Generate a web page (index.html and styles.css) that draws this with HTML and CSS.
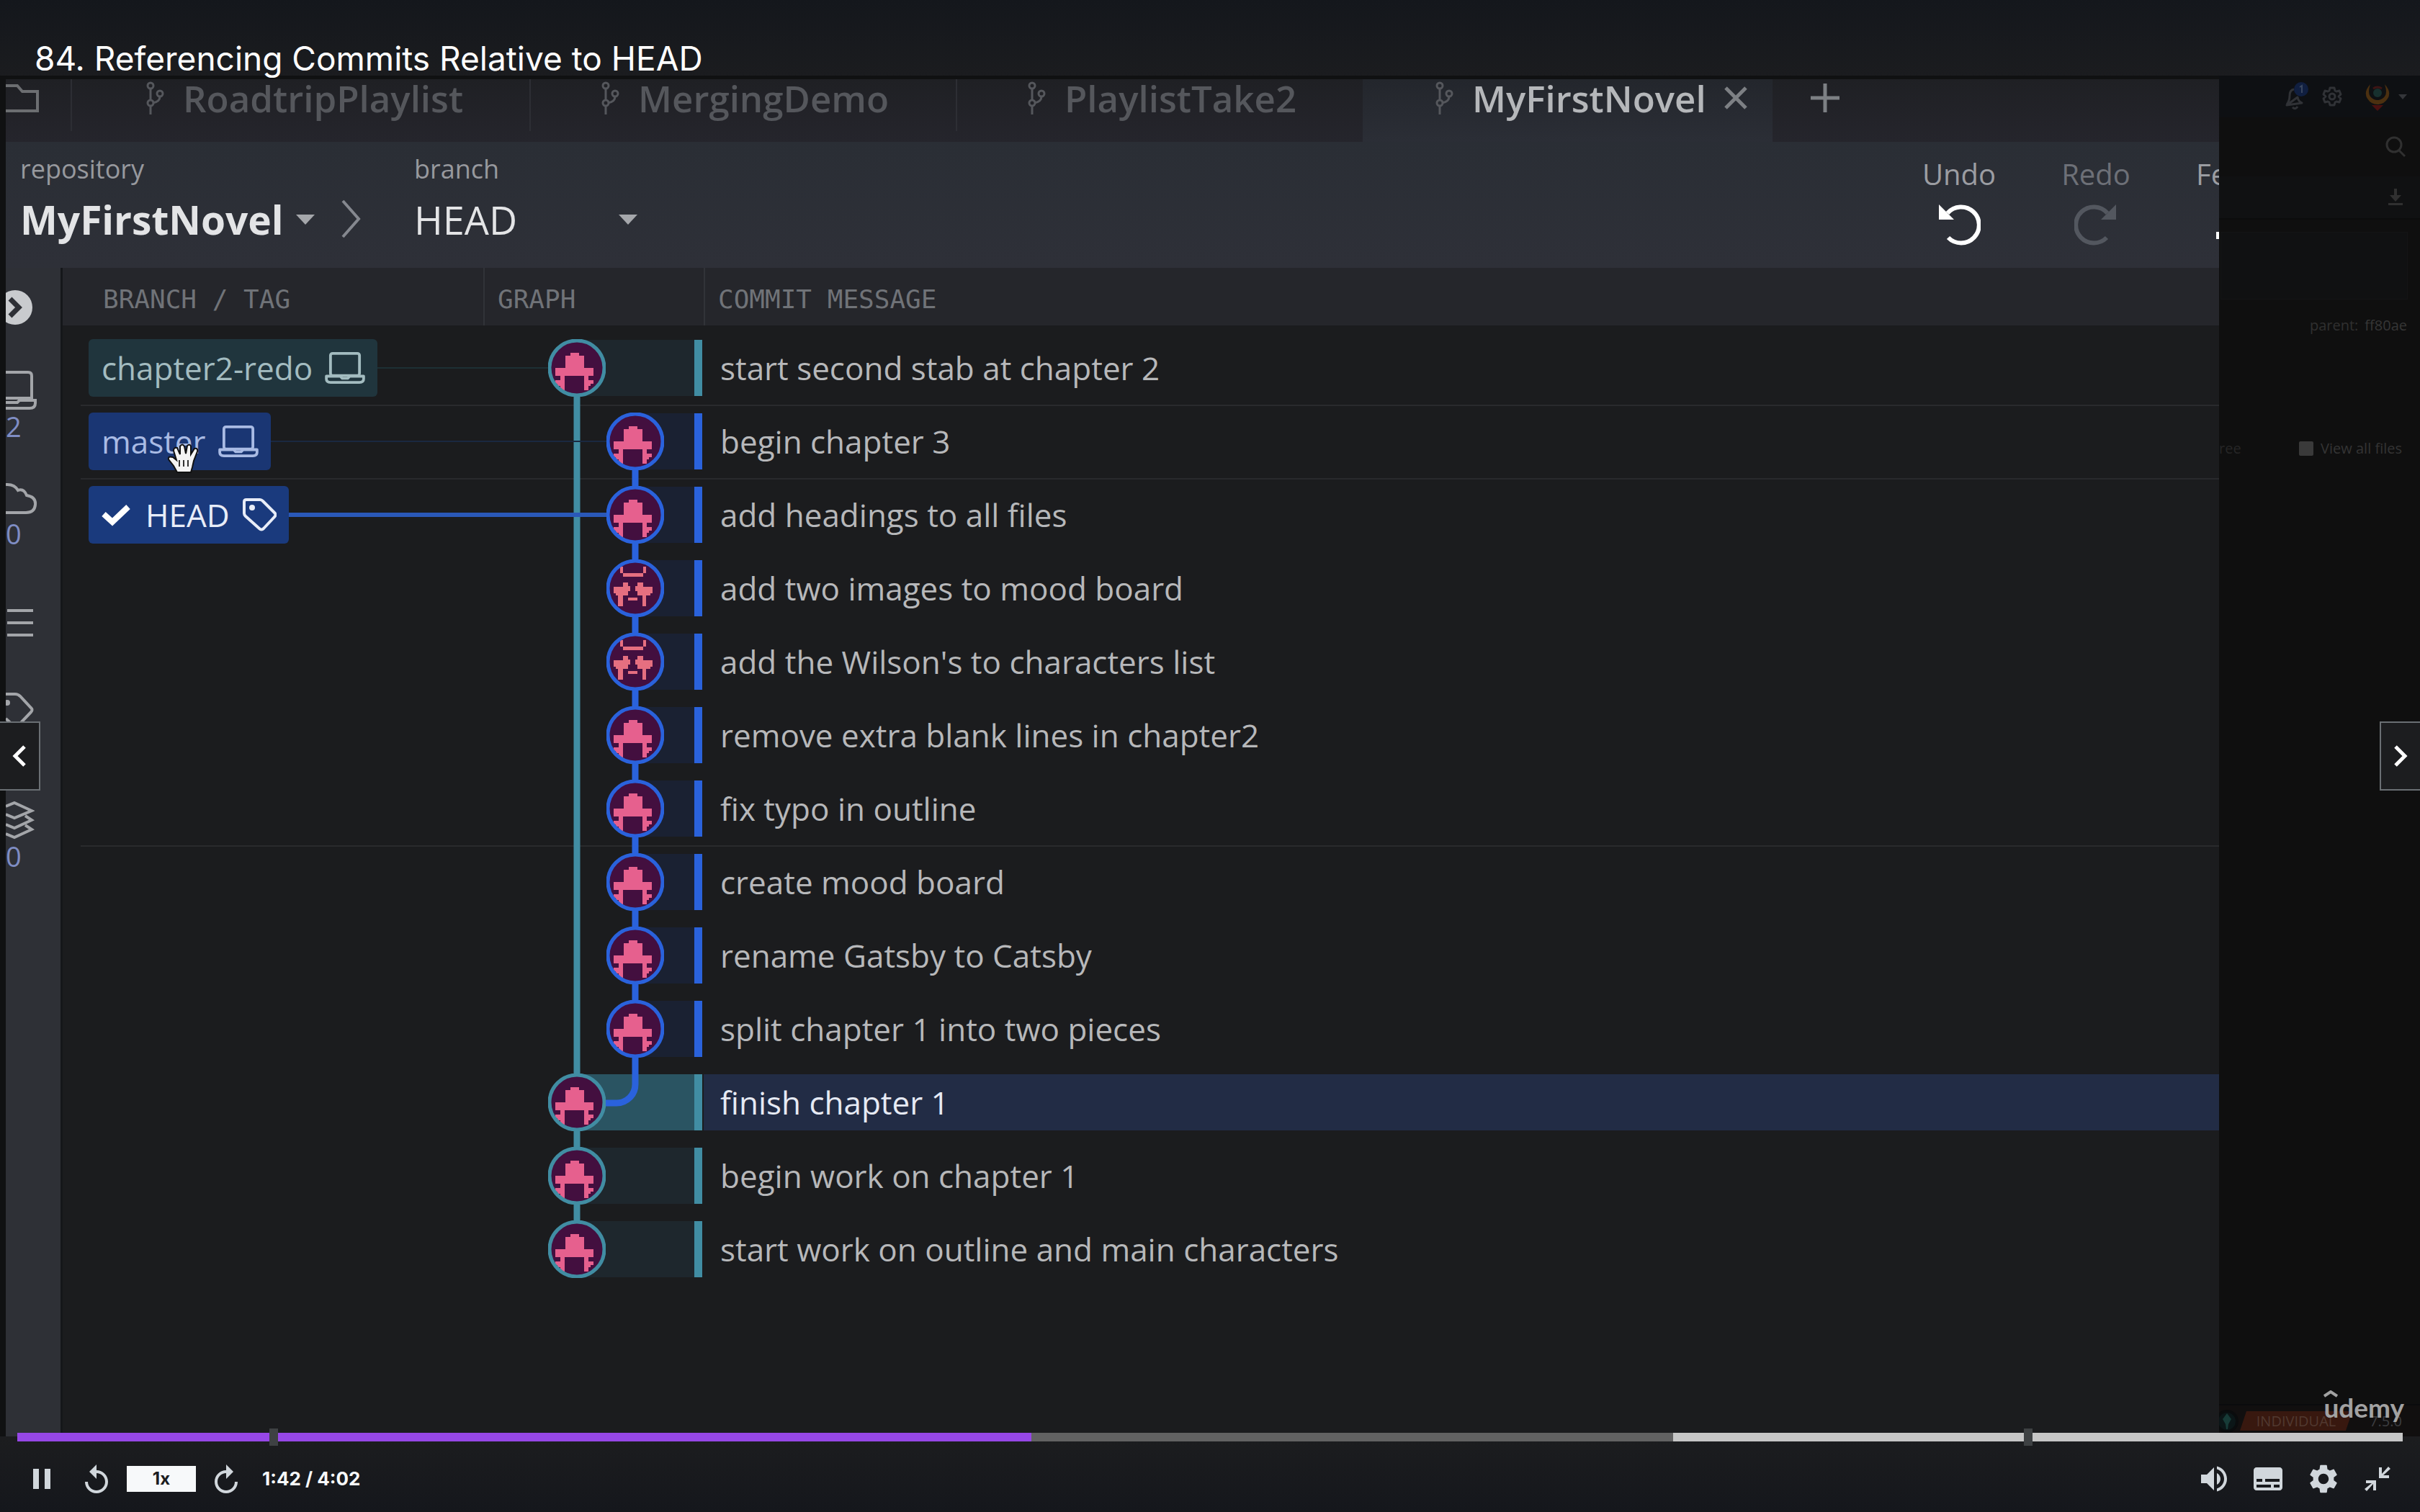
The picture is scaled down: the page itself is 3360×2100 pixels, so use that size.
FILE: index.html
```html
<!DOCTYPE html>
<html lang="en">
<head>
<meta charset="utf-8">
<meta name="viewport" content="width=device-width, initial-scale=1">
<title>84. Referencing Commits Relative to HEAD</title>
<link rel="stylesheet" href="styles.css">
</head>
<body>
<svg class="sprite" aria-hidden="true">
  <symbol id="fork" viewBox="0 0 28 48"><g fill="none" stroke="currentColor" stroke-width="3"><circle cx="8" cy="7" r="4"/><circle cx="8" cy="31" r="4"/><circle cx="21" cy="18" r="4"/><path d="M8 11v16M8 35v12M21 22c0 6-4 8-10 9"/></g></symbol>
  <symbol id="laptop" viewBox="0 0 58 48"><g fill="none" stroke="currentColor" stroke-width="4" stroke-linejoin="round"><rect x="8" y="3" width="42" height="32" rx="3"/><path d="M2 36h20l3 3h8l3-3h20v4q0 5-6 5H8q-6 0-6-5z"/></g></symbol>
  <symbol id="tag" viewBox="0 0 48 48"><path d="M3 6q0-3 3-3h19q2 0 4 2l16 16q3 3 0 6L30 43q-3 3-6 0L5 26q-2-2-2-4z" fill="none" stroke="currentColor" stroke-width="4" stroke-linejoin="round"/><circle cx="14" cy="14" r="4" fill="currentColor"/></symbol>
  <symbol id="crab" viewBox="-40 -40 80 80"><circle r="38" fill="#430f3f"/><path fill="#e6608e" d="M-9-21H3v4h7V0h13v11H16v6h7v5h-4v3h-3v6h-6V11h-27v20h-6v-6h-4v-3h-3v-5h7v-6h-7V0h14v-17h7z"/><circle r="38" fill="none" stroke="currentColor" stroke-width="5"/></symbol>
  <symbol id="bandit" viewBox="-40 -40 80 80"><circle r="38" fill="#430f3f"/><path fill="#e66f80" d="M-17-21h28v5h-28zM-21-30h4v9h-4zM11-30h4v9h-4zM-17-8h7v5h3v7h-3v6H3V4H0v-7h3v-5h8v6h13V7h-3v3h-6v15h-5V10h-27v15h-7V10h-3V7h-3v-9h13zM-10 13H3v4h-13z"/><circle r="38" fill="none" stroke="currentColor" stroke-width="5"/></symbol>
</svg>

<header class="title-bar"><h1>84. Referencing Commits Relative to HEAD</h1></header>

<main class="video">
  <section class="client">
    <nav class="tabs" aria-label="Repositories">
      <button class="folder" aria-label="Open repository"><svg width="46" height="40" viewBox="0 0 46 40" fill="none" stroke="currentColor" stroke-width="4"><path d="M0 2h16l7 8h21v27H0"/></svg></button>
      <button class="tab tab-a"><svg class="fork"><use href="#fork"/></svg>RoadtripPlaylist</button>
      <button class="tab tab-b"><svg class="fork"><use href="#fork"/></svg>MergingDemo</button>
      <button class="tab tab-c"><svg class="fork"><use href="#fork"/></svg>PlaylistTake2</button>
      <button class="tab active"><svg class="fork"><use href="#fork"/></svg>MyFirstNovel<svg class="close" width="32" height="32" viewBox="0 0 32 32" stroke="currentColor" stroke-width="5"><path d="M2 2l28 28M30 2L2 30"/></svg></button>
      <button class="add" aria-label="New tab"><svg width="40" height="40" viewBox="0 0 40 40" stroke="currentColor" stroke-width="5"><path d="M20 0v40M0 20h40"/></svg></button>
    </nav>

    <div class="toolbar">
      <div class="picker repo"><span class="caption">repository</span><button class="value strong">MyFirstNovel<i class="caret"></i></button></div>
      <svg class="crumb" width="30" height="54" viewBox="0 0 30 54" fill="none" stroke="#85888f" stroke-width="4"><path d="M3 2l22 25L3 52"/></svg>
      <div class="picker branch"><span class="caption">branch</span><button class="value">HEAD<i class="caret"></i></button></div>
      <div class="actions">
        <button class="action">Undo<svg width="60" height="60" viewBox="0 0 60 60"><path d="M14 15A25 25 0 1 1 15 49" fill="none" stroke="#fff" stroke-width="6"/><path d="M2 3v21h21z" fill="#fff"/></svg></button>
        <button class="action off">Redo<svg width="60" height="60" viewBox="0 0 60 60"><path d="M46 15A25 25 0 1 0 45 49" fill="none" stroke="#53575f" stroke-width="6"/><path d="M58 3v21H37z" fill="#53575f"/></svg></button>
        <button class="action fetch">Fetch<svg width="60" height="60" viewBox="0 0 60 60"><path d="M0 46h40" stroke="#fff" stroke-width="10"/></svg></button>
      </div>
    </div>

    <div class="workspace">
      <aside class="rail">
        <svg width="40" height="48" viewBox="0 0 40 48"><circle cx="13" cy="24" r="24" fill="#c9cbce"/><path d="M6 12l12 12L6 36" fill="none" stroke="#2e3036" stroke-width="7"/></svg>
        <div class="rail-item one"><svg width="46" height="56" viewBox="0 0 46 56" fill="none" stroke="#a3a5a9" stroke-width="4"><path d="M0 3h31q5 0 5 5v31H0M0 45h16l3-3h22v4q0 7-8 7H0"/></svg><span>2</span></div>
        <div class="rail-item two"><svg width="46" height="46" viewBox="0 0 46 46" fill="none" stroke="#a3a5a9" stroke-width="4"><path d="M0 3q12-1 17 8 8-3 12 7 13 2 12 13-1 11-13 11H0"/></svg><span>0</span></div>
        <svg class="three" width="40" height="44" viewBox="0 0 40 44" stroke="#a3a5a9" stroke-width="4"><path d="M2 4h36M2 21h36M2 38h36"/></svg>
        <svg class="four" width="40" height="50" viewBox="0 0 40 50"><path d="M0 3h13q4 0 7 3l15 16q3 3 0 6L17 47q-3 2-6 0L0 37" fill="none" stroke="#a3a5a9" stroke-width="4"/><circle cx="2" cy="15" r="4" fill="#a3a5a9"/></svg>
        <div class="rail-item five"><svg width="40" height="54" viewBox="0 0 40 54" fill="none" stroke="#a3a5a9" stroke-width="4"><path d="M0 7l12-5 24 11-24 10L0 18M0 32l12 5 24-11-9-6M0 45l12 5 24-11-9-6"/></svg><span>0</span></div>
      </aside>

      <table class="log">
        <colgroup><col class="col-branch"><col class="col-graph"><col></colgroup>
        <thead><tr><th>BRANCH / TAG</th><th>GRAPH</th><th>COMMIT MESSAGE</th></tr></thead>
        <tbody>
          <tr class="teal"><td class="refs"><div><span class="ref">chapter2-redo<svg class="ref-icon"><use href="#laptop"/></svg></span><i class="wire"></i></div></td>
            <td class="graph"><svg viewBox="0 0 306 102"><path class="thin" d="M0 51h90"/><path class="band" d="M130 12h163v78H130z"/><path class="bar" d="M293 12h11v78h-11z"/><path class="main" d="M130 51v51"/><use href="#crab" x="90" y="11" width="80" height="80"/></svg></td><td>start second stab at chapter 2</td></tr>
          <tr class="blue line"><td class="refs"><div><span class="ref">master<svg class="ref-icon"><use href="#laptop"/></svg></span><i class="wire"></i></div></td>
            <td class="graph"><svg viewBox="0 0 306 102"><path class="main" d="M130 0v102"/><path class="thin" d="M0 51h171"/><path class="band" d="M211 12h82v78h-82z"/><path class="bar" d="M293 12h11v78h-11z"/><path class="side" d="M211 51v51"/><use href="#crab" x="171" y="11" width="80" height="80"/></svg></td><td>begin chapter 3</td></tr>
          <tr class="blue line head"><td class="refs"><div><span class="ref"><svg class="check" width="40" height="32" viewBox="0 0 40 32"><path d="M3 15l12 11L37 5" fill="none" stroke="#fff" stroke-width="8"/></svg>HEAD<svg class="ref-icon tag"><use href="#tag"/></svg></span><i class="wire"></i></div></td>
            <td class="graph"><svg viewBox="0 0 306 102"><path class="main" d="M130 0v102"/><path class="thin" d="M0 51h171"/><path class="band" d="M211 12h82v78h-82z"/><path class="bar" d="M293 12h11v78h-11z"/><path class="side" d="M211 0v102"/><use href="#crab" x="171" y="11" width="80" height="80"/></svg></td><td>add headings to all files</td></tr>
          <tr class="blue"><td></td><td class="graph"><svg viewBox="0 0 306 102"><path class="main" d="M130 0v102"/><path class="band" d="M211 12h82v78h-82z"/><path class="bar" d="M293 12h11v78h-11z"/><path class="side" d="M211 0v102"/><use href="#bandit" x="171" y="11" width="80" height="80"/></svg></td><td>add two images to mood board</td></tr>
          <tr class="blue"><td></td><td class="graph"><svg viewBox="0 0 306 102"><path class="main" d="M130 0v102"/><path class="band" d="M211 12h82v78h-82z"/><path class="bar" d="M293 12h11v78h-11z"/><path class="side" d="M211 0v102"/><use href="#bandit" x="171" y="11" width="80" height="80"/></svg></td><td>add the Wilson's to characters list</td></tr>
          <tr class="blue"><td></td><td class="graph"><svg viewBox="0 0 306 102"><path class="main" d="M130 0v102"/><path class="band" d="M211 12h82v78h-82z"/><path class="bar" d="M293 12h11v78h-11z"/><path class="side" d="M211 0v102"/><use href="#crab" x="171" y="11" width="80" height="80"/></svg></td><td>remove extra blank lines in chapter2</td></tr>
          <tr class="blue"><td></td><td class="graph"><svg viewBox="0 0 306 102"><path class="main" d="M130 0v102"/><path class="band" d="M211 12h82v78h-82z"/><path class="bar" d="M293 12h11v78h-11z"/><path class="side" d="M211 0v102"/><use href="#crab" x="171" y="11" width="80" height="80"/></svg></td><td>fix typo in outline</td></tr>
          <tr class="blue line"><td></td><td class="graph"><svg viewBox="0 0 306 102"><path class="main" d="M130 0v102"/><path class="band" d="M211 12h82v78h-82z"/><path class="bar" d="M293 12h11v78h-11z"/><path class="side" d="M211 0v102"/><use href="#crab" x="171" y="11" width="80" height="80"/></svg></td><td>create mood board</td></tr>
          <tr class="blue"><td></td><td class="graph"><svg viewBox="0 0 306 102"><path class="main" d="M130 0v102"/><path class="band" d="M211 12h82v78h-82z"/><path class="bar" d="M293 12h11v78h-11z"/><path class="side" d="M211 0v102"/><use href="#crab" x="171" y="11" width="80" height="80"/></svg></td><td>rename Gatsby to Catsby</td></tr>
          <tr class="blue"><td></td><td class="graph"><svg viewBox="0 0 306 102"><path class="main" d="M130 0v102"/><path class="band" d="M211 12h82v78h-82z"/><path class="bar" d="M293 12h11v78h-11z"/><path class="side" d="M211 0v102"/><use href="#crab" x="171" y="11" width="80" height="80"/></svg></td><td>split chapter 1 into two pieces</td></tr>
          <tr class="teal selected"><td></td><td class="graph"><svg viewBox="0 0 306 102"><path class="band" d="M130 12h163v78H130z"/><path class="bar" d="M293 12h11v78h-11z"/><path class="main" d="M130 0v102"/><path class="side" d="M211 0v26a26 26 0 0 1-26 26h-20"/><use href="#crab" x="90" y="11" width="80" height="80"/></svg></td><td>finish chapter 1</td></tr>
          <tr class="teal"><td></td><td class="graph"><svg viewBox="0 0 306 102"><path class="band" d="M130 12h163v78H130z"/><path class="bar" d="M293 12h11v78h-11z"/><path class="main" d="M130 0v102"/><use href="#crab" x="90" y="11" width="80" height="80"/></svg></td><td>begin work on chapter 1</td></tr>
          <tr class="teal"><td></td><td class="graph"><svg viewBox="0 0 306 102"><path class="band" d="M130 12h163v78H130z"/><path class="bar" d="M293 12h11v78h-11z"/><path class="main" d="M130 0v51"/><use href="#crab" x="90" y="11" width="80" height="80"/></svg></td><td>start work on outline and main characters</td></tr>
        </tbody>
      </table>
    </div>
  </section>

  <aside class="details">
    <div class="profile">
      <svg width="40" height="46" viewBox="0 0 40 46"><path d="M9 34q4-5 4-12 0-8 6-9M24 24q1 6 6 8L9 35zM17 38q4 4 7-1" fill="none" stroke="#303236" stroke-width="3" stroke-linejoin="round"/><circle cx="29" cy="13" r="10" fill="#101f40"/><path d="M27 10l3-2v10" fill="none" stroke="#39465e" stroke-width="2"/></svg>
      <svg width="28" height="28" viewBox="0 0 28 28" fill="none" stroke="#303236" stroke-width="3" stroke-linejoin="round"><path d="M11 2h6l1 4 2 1 4-1 2 5-3 3 3 3-2 5-4-1-2 1-1 4h-6l-1-4-2-1-4 1-2-5 3-3-3-3 2-5 4 1 2-1z"/><circle cx="14" cy="14" r="4"/></svg>
      <svg width="34" height="42" viewBox="0 0 34 42"><path d="M7 4Q-3 15 3 24q5 8 14 8t14-8q6-9-4-20 4 12 0 17-4 5-10 5T7 21Q3 16 7 4z" fill="#4b3010"/><circle cx="17" cy="16" r="6" fill="#17302e"/><path d="M11 10q6-4 12 0" fill="none" stroke="#3d1515" stroke-width="3"/><path d="M9 33h16l-4 4-4 4-4-4z" fill="#4b1010"/></svg>
      <i class="small-caret"></i>
    </div>
    <div class="search"><svg width="28" height="30" viewBox="0 0 28 30" fill="none" stroke="#303030" stroke-width="3"><circle cx="12" cy="12" r="10"/><path d="M19 20l8 8"/></svg></div>
    <div class="download"><svg width="20" height="24" viewBox="0 0 20 24" fill="#303030"><path d="M8 0h4v9h6l-8 9-8-9h6zM0 20h20v3H0z"/></svg></div>
    <div class="message-box"></div>
    <div class="parent"><span>parent:</span><a href="#ff80ae">ff80ae</a></div>
    <div class="files"><span class="tree">ree</span><label><input type="checkbox">View all files</label></div>
    <div class="status">
      <svg width="34" height="34" viewBox="0 0 34 34"><circle cx="11" cy="17" r="14" fill="#0b1617" stroke="#0a0c0d" stroke-width="4"/><path d="M11 6l6 8-4 7-1 7h-2l-1-7-4-7z" fill="#173b37"/></svg>
      <span class="plan">INDIVIDUAL</span><span class="version">7.5.0</span>
    </div>
  </aside>

  <div class="watermark"><svg width="20" height="11" viewBox="0 0 20 11"><path d="M1 8l9-6 9 6" fill="none" stroke="#a2a2a2" stroke-width="4"/></svg><span>udemy</span></div>
  <button class="step prev" aria-label="Previous lecture"><svg width="22" height="32" viewBox="0 0 22 32"><path d="M18 3L5 16l13 13" fill="none" stroke="#fff" stroke-width="5"/></svg></button>
  <button class="step next" aria-label="Next lecture"><svg width="22" height="32" viewBox="0 0 22 32"><path d="M4 3l13 13L4 29" fill="none" stroke="#fff" stroke-width="5"/></svg></button>
</main>

<footer class="player">
  <div class="progress">
    <span class="played" style="width:42.5%"></span><span class="buffered" style="width:26.9%"></span><span class="rest"></span>
    <i class="mark" style="left:10.57%"></i><i class="mark" style="left:84.12%"></i>
  </div>
  <div class="controls">
    <button class="icon pause" aria-label="Pause"><svg width="24" height="28" viewBox="0 0 24 28"><path d="M0 0h8v28H0zM16 0h8v28h-8z"/></svg></button>
    <button class="icon" aria-label="Rewind 5 seconds"><svg width="32" height="40" viewBox="4 1 16 20"><path d="M12 5V1L7 6l5 5V7c3.310 0 6 2.690 6 6s-2.690 6-6 6-6-2.690-6-6H4c0 4.420 3.580 8 8 8s8-3.580 8-8-3.580-8-8-8z"/></svg></button>
    <button class="rate">1x</button>
    <button class="icon" aria-label="Forward 5 seconds"><svg width="32" height="40" viewBox="4 1 16 20"><path d="M12 5V1l5 5-5 5V7c-3.310 0-6 2.690-6 6s2.690 6 6 6 6-2.690 6-6h2c0 4.420-3.580 8-8 8s-8-3.580-8-8 3.580-8 8-8z"/></svg></button>
    <span class="time">1:42 / 4:02</span>
    <div class="right">
      <button class="icon" aria-label="Volume"><svg width="36" height="36" viewBox="3 3 18 18"><path d="M3 9v6h4l5 5V4L7 9H3zm11 -1v8c1.480-.730 2.500-2.250 2.500-4.020S15.480 8.700 14 8zM14 3.230v2.060c2.890.860 5 3.540 5 6.710s-2.110 5.850-5 6.710v2.060c4.010-.910 7-4.490 7-8.770s-2.990-7.860-7-8.770z"/></svg></button>
      <button class="icon" aria-label="Subtitles"><svg width="40" height="32" viewBox="2 4 20 16"><path d="M20 4H4c-1.100 0-2 .9-2 2v12c0 1.100.9 2 2 2h16c1.100 0 2-.9 2-2V6c0-1.100-.9-2-2-2zM4 12h4v2H4v-2zm10 6H4v-2h10v2zm6 0h-4v-2h4v2zm0-4H10v-2h10v2z"/></svg></button>
      <button class="icon" aria-label="Settings"><svg width="40" height="40" viewBox="2 2 20 20"><path d="M19.140 12.940c.040-.3.060-.610.060-.940 0-.320-.020-.640-.070-.940l2.030-1.580c.180-.140.230-.410.120-.610l-1.920-3.320c-.120-.220-.370-.290-.590-.220l-2.390.960c-.5-.380-1.030-.7-1.620-.940l-.360-2.540c-.040-.240-.240-.410-.480-.410h-3.840c-.240 0-.430.170-.470.410l-.36 2.540c-.59.240-1.130.570-1.620.940l-2.390-.960c-.22-.080-.47 0-.59.220L2.740 8.870c-.12.210-.08.470.12.610l2.030 1.580c-.05.300-.09.630-.09.940s.020.640.070.940l-2.030 1.580c-.18.140-.23.410-.12.610l1.920 3.320c.12.220.37.290.59.220l2.390-.96c.5.380 1.030.7 1.620.94l.36 2.540c.05.240.24.410.48.410h3.840c.24 0 .44-.17.470-.41l.36-2.540c.59-.24 1.130-.56 1.620-.94l2.390.96c.22.080.47 0 .59-.22l1.920-3.320c.12-.22.070-.47-.12-.61l-2.010-1.580zM12 15.600c-1.980 0-3.600-1.620-3.600-3.600s1.620-3.600 3.600-3.600 3.600 1.620 3.600 3.600-1.620 3.600-3.600 3.600z"/></svg></button>
      <button class="icon" aria-label="Exit full screen"><svg width="36" height="36" viewBox="0 0 36 36"><path d="M20 2h4v9L33 1l3 3-10 9h8v4H20zM2 20h14v14h-4v-9L3 35l-3-3 10-8H2z"/></svg></button>
    </div>
  </div>
</footer>

<svg class="grab-cursor" width="46" height="44" viewBox="0 0 46 44" aria-hidden="true"><path d="M14 42L9 33 2 24q-1-5 6-3l5 4-4-13q0-5 5-4l4 9V6q3-5 6 0l2 10 2-11q4-3 5 1v11l5-8q5-1 4 4l-5 13-2 9-2 7z" fill="#f4f4f4" stroke="#111" stroke-width="2"/><path d="M17 25v9M23 25v9M29 25v9" stroke="#333" stroke-width="2"/></svg>
</body>
</html>
```
FILE: styles.css
```css
* { box-sizing: border-box; }
body {
  margin: 0;
  min-height: 100vh;
  display: flex;
  flex-direction: column;
  position: relative;
  overflow-x: hidden;
  background: #1b1c1e;
  color: #b7b8ba;
  font-family: "Open Sans", "Noto Sans", sans-serif;
}
button {
  margin: 0;
  padding: 0;
  border: 0;
  background: none;
  color: inherit;
  font: inherit;
}
svg { display: block; flex: none; }
.sprite { position: absolute; width: 0; height: 0; }

.title-bar {
  height: 105px;
  padding: 52px 48px 0;
  background: linear-gradient(#14171c, #1b1c1f);
}
h1 {
  position: relative;
  z-index: 2;
  margin: 0;
  color: #fff;
  font: 400 46px/58px Inter, sans-serif;
  white-space: nowrap;
}

/* Recorded desktop */
.video {
  flex: 1;
  position: relative;
  display: grid;
  grid-template-columns: minmax(0, 1fr) 279px;
  background: #101112;
}
.client {
  display: flex;
  flex-direction: column;
  min-width: 0;
  margin: 5px 0 0 8px;
  background: #1b1c1e;
  overflow: hidden;
}
.tabs {
  display: flex;
  height: 87px;
  background: linear-gradient(#1f2024, #25252c);
  color: #55575c;
  font-size: 51px;
  font-weight: 600;
  line-height: 52px;
}
.folder {
  width: 92px;
  padding-bottom: 34px;
  color: #6c6e71;
}
.tab {
  display: flex;
  align-items: center;
  gap: 25px;
  padding: 0 0 36px 101px;
  white-space: nowrap;
}
.fork { width: 28px; height: 48px; }
.folder, .tab-a, .tab-b {
  background: linear-gradient(#2d2e34, #2d2e34) 100% 0 / 2px 72px no-repeat;
}
.tab-a { width: 637px; }
.tab-b { width: 592px; padding-left: 96px; }
.tab-c { width: 563px; padding-left: 96px; }
.tab.active {
  width: 569px;
  padding-left: 99px;
  background: linear-gradient(#23262c, #2b2e36);
  color: #b5b7ba;
}
.active .fork { color: #55575c; }
.close { color: #7d8084; }
.add { padding: 0 0 36px 53px; color: #7d8084; }

.toolbar {
  display: flex;
  height: 175px;
  background: linear-gradient(#2a2e35, #2e3038);
}
.picker {
  display: flex;
  flex-direction: column;
  align-items: flex-start;
  gap: 14px;
  padding-top: 14px;
}
.repo { width: 465px; padding-left: 20px; }
.branch { width: 340px; padding-left: 72px; }
.caption { color: #97999e; font-size: 36px; line-height: 48px; }
.value {
  display: flex;
  align-items: center;
  gap: 17px;
  color: #e3e4e6;
  font-size: 54px;
  line-height: 64px;
  white-space: nowrap;
}
.strong { font-size: 55px; font-weight: 700; }
.branch .value { width: 310px; justify-content: space-between; }
.caret {
  border: 13px solid transparent;
  border-top: 14px solid #a5a7ab;
  border-bottom: 0;
}
.crumb { margin-top: 80px; }
.actions {
  display: flex;
  gap: 68px;
  margin-left: auto;
  padding-top: 20px;
}
.action {
  display: flex;
  flex-direction: column;
  align-items: center;
  gap: 14px;
  width: 122px;
  height: 130px;
  color: #9b9da2;
  font-size: 40px;
  line-height: 50px;
}
.action.off { color: #6d7077; }
.action.fetch { width: 32px; margin-left: 10px; align-items: flex-start; overflow: hidden; }
.fetch svg { align-self: flex-end; margin-right: -56px; }

.workspace { display: flex; flex: 1; min-width: 0; }
.rail {
  display: flex;
  flex-direction: column;
  width: 79px;
  padding-top: 31px;
  background: #2e3036;
  border-right: 3px solid #15171a;
  color: #7f8dc4;
  font-size: 38px;
  line-height: 44px;
}
.rail-item { display: flex; flex-direction: column; align-items: flex-start; }
.one { margin-top: 63px; }
.two { margin-top: 56px; }
.two span { margin-top: 3px; }
.three { margin-top: 81px; }
.four { margin-top: 73px; }
.five { margin-top: 102px; }

.log {
  flex: 1;
  align-self: flex-start;
  table-layout: fixed;
  width: 0;
  border-collapse: collapse;
  border-spacing: 0;
}
.col-branch { width: 584px; }
.col-graph { width: 306px; }
.log th {
  height: 80px;
  padding: 8px 0 0 20px;
  background: #25262b;
  color: #707378;
  font: 400 36px/40px "DejaVu Sans Mono", monospace;
  text-align: left;
  white-space: nowrap;
}
.log th:first-child { padding-left: 56px; }
.log th + th { box-shadow: inset 2px 0 #313338; }
.log tbody::before { content: ""; display: block; height: 8px; }
.log td {
  height: 102px;
  padding: 0 0 0 23px;
  font-size: 44px;
  line-height: 60px;
  white-space: nowrap;
}
.log td.refs { padding: 0 0 0 36px; }
.log td.graph { padding: 0; }
.graph svg { width: 306px; height: 102px; }
.line td { background: linear-gradient(#292a2d, #292a2d) 0 0 / 100% 2px no-repeat; }
.line td:first-child { background-position: 25px 0; }
.refs > div { display: flex; align-items: center; }
.ref {
  display: flex;
  align-items: center;
  gap: 17px;
  height: 80px;
  padding: 0 17px 0 18px;
  border-radius: 6px;
  line-height: 60px;
}
.ref-icon { width: 56px; height: 46px; }
.ref-icon.tag { width: 48px; height: 48px; }
.wire { flex: 1; height: 2px; }
.teal { --line: #418da3; --band: #1e272d; --wire: #1d3034; }
.blue { --line: #2a62dc; --band: #1a2132; --wire: #1a2840; }
.teal .ref { background: #20353d; color: #a3bcc0; }
.teal .wire { background: #1d3034; }
.blue .ref { background: #1a3673; color: #a9bbe4; }
.blue .wire { background: #1a2840; }
.head { --wire: #2a58b8; }
.head .ref { background: #1a3a7d; color: #e8edf8; }
.check { margin-right: 4px; }
.head .wire { height: 6px; background: #2a58b8; }
.graph { color: var(--line); }
.band { fill: var(--band); }
.bar { fill: var(--line); }
.main { fill: none; stroke: #418da3; stroke-width: 9; }
.side { fill: none; stroke: #2a62dc; stroke-width: 9; }
.thin { fill: none; stroke: var(--wire); stroke-width: 2; }
.head .thin { stroke-width: 6; }
.selected { --band: #2a5462; }
.selected td:last-child {
  background: linear-gradient(#222c45, #222c45) 0 12px / 100% 78px no-repeat;
  color: #e6eaf4;
}

/* Dimmed commit details */
.details {
  display: flex;
  flex-direction: column;
  background: #0f0f0f;
  color: #303030;
  font-size: 20px;
  line-height: 30px;
}
.profile, .search, .download, .parent, .files, .status { display: flex; align-items: center; }
.profile {
  height: 58px;
  padding-left: 85px;
  gap: 18px;
  background: #0e1013;
}
.profile svg + svg + svg { margin-left: 14px; }
.small-caret {
  margin-left: -6px;
  border: 6px solid transparent;
  border-top: 7px solid #34363a;
  border-bottom: 0;
}
.search { height: 82px; padding-right: 20px; justify-content: flex-end; }
.download { height: 60px; padding-right: 24px; justify-content: flex-end; background: #101112; border-bottom: 2px solid #0c0c0c; }
.message-box { height: 94px; margin: 17px 17px 0 2px; background: #101112; border: 1px solid #141516; }
.parent { height: 72px; padding-right: 18px; gap: 9px; justify-content: flex-end; }
.parent a { color: #363636; text-decoration: none; }
.files { height: 72px; margin-top: 99px; padding-right: 25px; justify-content: space-between; color: #343434; }
.tree { color: #262626; }
.files label { display: flex; align-items: center; gap: 10px; }
.files input {
  appearance: none;
  width: 20px;
  height: 20px;
  margin: 0;
  border-radius: 2px;
  background: #3a3a3a;
}
.status { height: 45px; margin-top: auto; border-top: 2px solid #0a0b0d; background: #110f0f; }
.plan {
  width: 156px;
  margin-left: -5px;
  background: #38180f;
  clip-path: polygon(9px 0, 100% 0, 147px 100%, 0 100%);
  color: #51382f;
  line-height: 27px;
  text-align: center;
}
.version { margin-left: 24px; color: #3c3d40; }

.watermark {
  position: absolute;
  right: 22px;
  bottom: 20px;
  color: #a2a2a2;
  font: 700 37px/40px Lato, sans-serif;
}
.watermark svg { margin-bottom: -7px; }
.watermark span { display: block; }
.step {
  position: absolute;
  top: 897px;
  width: 56px;
  height: 96px;
  display: grid;
  place-items: center;
  background: #1c1d1f;
  border: 2px solid #6a6f73;
}
.prev { left: 0; border-left: 0; }
.next { right: 0; border-right: 0; }

/* Player controls */
.player {
  position: relative;
  height: 105px;
  background: linear-gradient(#1c1d1f, #15171c);
}
.progress {
  position: relative;
  display: flex;
  height: 12px;
  margin: -5px 24px 0;
}
.played { background: #9647e6; }
.buffered { background: #626262; }
.rest { flex: 1; background: #c6c6c6; }
.mark {
  position: absolute;
  top: -6px;
  width: 12px;
  height: 24px;
  background: #3e4143;
}
.controls {
  display: flex;
  align-items: center;
  height: 98px;
  padding: 6px 41px 0 46px;
  color: #f7f9fa;
  font: 700 26px/36px Inter, sans-serif;
}
.icon { fill: #d1d7dc; }
.pause { margin-right: 48px; }
.rate {
  width: 96px;
  height: 36px;
  margin: 0 26px;
  background: #f7f9fa;
  color: #1c1d1f;
  font-size: 24px;
}
.time { margin-left: 34px; white-space: nowrap; }
.right { display: flex; align-items: center; gap: 37px; margin-left: auto; }

.grab-cursor { position: absolute; left: 232px; top: 614px; }
```
